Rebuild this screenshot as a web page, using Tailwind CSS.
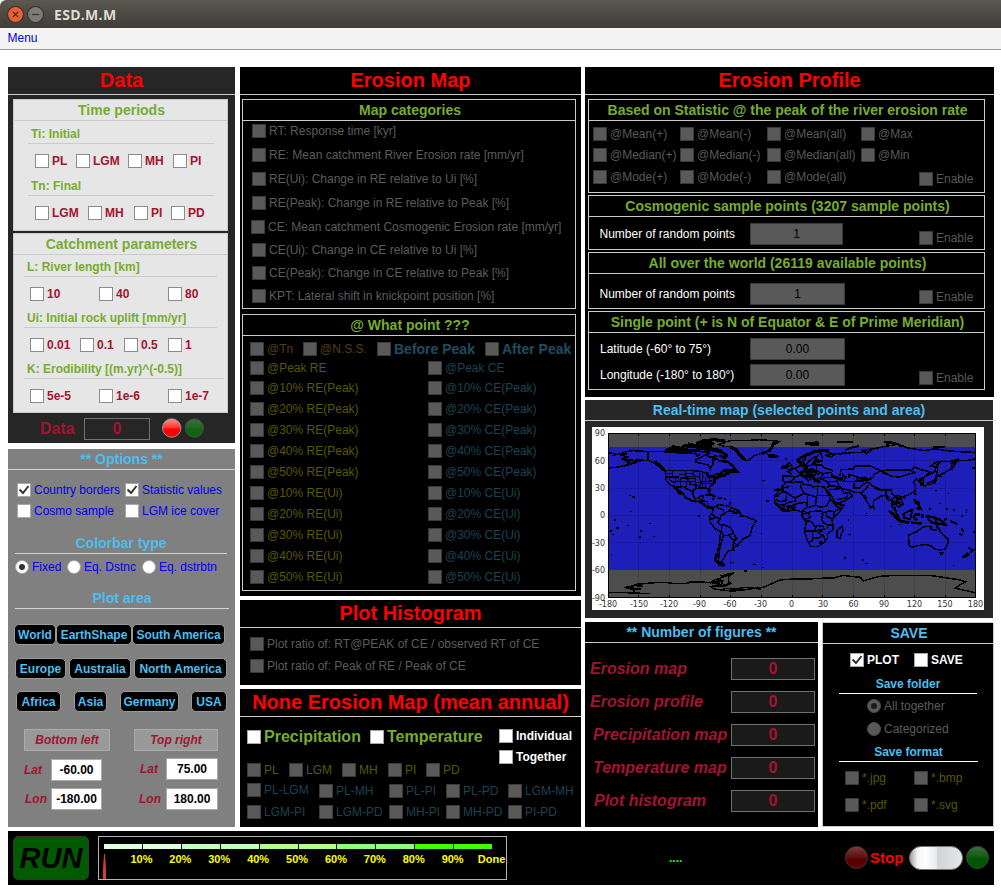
<!DOCTYPE html>
<html lang="en">
<head>
<meta charset="utf-8">
<title>ESD.M.M</title>
<script src="https://cdn.jsdelivr.net/npm/@tailwindcss/browser@4"></script>
</head>
<body class="h-[894px] w-[1001px] overflow-hidden bg-white font-['Liberation_Sans',Arial,sans-serif] text-[12px] leading-[14px] [&_label]:flex [&_label]:h-[14px] [&_label]:items-center [&_label]:gap-[3px] [&_label]:whitespace-nowrap [&_i]:size-3.5 [&_i]:shrink-0 [&_i]:border">

<!-- Window title bar -->
<header class="flex h-7 items-center gap-[3px] rounded-tl-md bg-linear-to-b from-[#5b5850] to-[#3e3d38] pl-[7px]">
  <svg class="size-[17px]" viewBox="0 0 16 16"><circle cx="8" cy="8" r="7.5" fill="#ec5f35" stroke="#33312c"/><path d="M5.5 5.5l5 5m0-5l-5 5" stroke="#4a2415" stroke-width="1.2"/></svg>
  <svg class="size-[17px]" viewBox="0 0 16 16"><circle cx="8" cy="8" r="7.5" fill="#7d7b73" stroke="#33312c"/><path d="M4.5 8h7" stroke="#3a3933" stroke-width="1.2"/></svg>
  <h1 class="ml-[7px] mt-0.5 font-['Open_Sans',sans-serif] text-[14px] font-bold tracking-[0.3px] text-[#dfdbd2]">ESD.M.M</h1>
</header>
<nav class="h-[22px] border-b border-[#999] bg-[#f3f3f3] pl-[7.5px] leading-[21px] text-[#0000e6]">Menu</nav>

<main class="mt-[17px] flex pl-2">
  <!-- Left column -->
  <div class="flex w-[227px] flex-col gap-1.5">
    <section class="h-[376px] bg-[#262626] font-bold [&_i]:border-[#8c8c8c] [&_i]:bg-white">
      <h2 class="h-7 border-b border-[#c8cccc] text-center text-[20px] leading-[27px] text-[#f00]">Data</h2>
      <div class="ml-[5px] mt-1 h-[132px] w-[215px] border border-[#c8cccc] bg-[#e6e6e6] text-[#a2142f]">
        <h3 class="h-[21px] border-b border-[#c8cccc] pl-0.5 text-center text-[14px] leading-[21px] text-[#77ac30]">Time periods</h3>
        <h4 class="ml-3.5 mt-1 h-[19px] w-[186px] border-b border-[#c8cccc] pl-[3px] leading-[18px] text-[#77ac30]">Ti: Initial</h4>
        <div class="ml-[21px] mt-2.5 grid grid-cols-[41px_52px_45px_40px]"><label><i></i>PL</label><label><i></i>LGM</label><label><i></i>MH</label><label><i></i>PI</label></div>
        <h4 class="ml-3.5 mt-[9px] h-[19px] w-[186px] border-b border-[#c8cccc] pl-[3px] leading-[18px] text-[#77ac30]">Tn: Final</h4>
        <div class="ml-[21px] mt-2.5 grid grid-cols-[53px_46px_37px_40px]"><label><i></i>LGM</label><label><i></i>MH</label><label><i></i>PI</label><label><i></i>PD</label></div>
      </div>
      <div class="ml-[5px] mt-0.5 h-[180px] w-[215px] border border-[#c8cccc] bg-[#e6e6e6] text-[#a2142f]">
        <h3 class="h-[21px] border-b border-[#c8cccc] pl-0.5 text-center text-[14px] leading-[21px] text-[#77ac30]">Catchment parameters</h3>
        <h4 class="ml-2.5 mt-[3px] h-[19px] w-[193px] border-b border-[#c8cccc] pl-[3px] leading-[18px] text-[#77ac30]">L: River length [km]</h4>
        <div class="ml-4 mt-2.5 grid grid-cols-[69px_69px_40px]"><label><i></i>10</label><label><i></i>40</label><label><i></i>80</label></div>
        <h4 class="ml-2.5 mt-2 h-[19px] w-[193px] border-b border-[#c8cccc] pl-[3px] leading-[18px] text-[#77ac30]">Ui: Initial rock uplift [mm/yr]</h4>
        <div class="ml-4 mt-2.5 grid grid-cols-[50px_44px_44px_40px]"><label><i></i>0.01</label><label><i></i>0.1</label><label><i></i>0.5</label><label><i></i>1</label></div>
        <h4 class="ml-2.5 mt-2 h-[19px] w-[200px] border-b border-[#c8cccc] pl-[3px] leading-[18px] text-[#77ac30]">K: Erodibility [(m.yr)^(-0.5)]</h4>
        <div class="ml-4 mt-2.5 grid grid-cols-[69px_69px_40px]"><label><i></i>5e-5</label><label><i></i>1e-6</label><label><i></i>1e-7</label></div>
      </div>
      <div class="mt-[5px] flex h-[22px] items-center pl-8 text-[16px] text-[#a2142f]">
        <span class="w-11">Data</span>
        <span class="h-[22px] w-[66px] border border-[#707070] text-center leading-5">0</span>
        <svg class="mb-0.5 ml-3 h-5 w-[42px]" viewBox="0 0 42 20">
          <defs><linearGradient id="lr" x2="0" y2="1"><stop offset="0" stop-color="#ff9090"/><stop offset=".5" stop-color="#ff3030"/><stop offset=".55" stop-color="#f00"/></linearGradient><linearGradient id="lg" x2="0" y2="1"><stop offset="0" stop-color="#3c6e3c"/><stop offset=".5" stop-color="#1f671f"/><stop offset=".55" stop-color="#126312"/></linearGradient></defs>
          <circle cx="9.7" cy="10" r="9.2" fill="url(#lr)" stroke="#999"/><circle cx="32.4" cy="10" r="9.2" fill="url(#lg)" stroke="#3f4f3f"/>
        </svg>
      </div>
    </section>

    <section class="h-[378px] bg-[#808080] text-[#0000f0]">
      <h2 class="h-[21px] border-b border-[#d0d4d4] text-center text-[14px] font-bold leading-5 text-[#4dbeee]">** Options **</h2>
      <div class="ml-[9px] mt-[13px] grid grid-cols-[108px_100px] gap-y-[7px] [&_i]:border-[#a6a6a6] [&_i]:bg-white">
        <label><i><svg viewBox="0 0 12 12"><path d="M1.5 5.5L5 9L10.5 2" fill="none" stroke="#333" stroke-width="2"/></svg></i>Country borders</label>
        <label><i><svg viewBox="0 0 12 12"><path d="M1.5 5.5L5 9L10.5 2" fill="none" stroke="#333" stroke-width="2"/></svg></i>Statistic values</label>
        <label><i></i>Cosmo sample</label><label><i></i>LGM ice cover</label>
      </div>
      <h3 class="ml-[7px] mt-[15px] h-[21px] w-[212px] border-b border-[#d0d4d4] text-center text-[14px] font-bold leading-5 text-[#4dbeee]">Colorbar type</h3>
      <div class="ml-[7px] mt-1.5 grid grid-cols-[52px_75px_80px] [&_i]:rounded-full [&_i]:border-[#a6a6a6] [&_i]:bg-white">
        <label><i class="flex items-center justify-center"><b class="size-1.5 rounded-full bg-[#333]"></b></i>Fixed</label><label><i></i>Eq. Dstnc</label><label><i></i>Eq. dstrbtn</label>
      </div>
      <h3 class="ml-[7px] mt-3.5 h-[21px] w-[214px] border-b border-[#d0d4d4] text-center text-[14px] font-bold leading-5 text-[#4dbeee]">Plot area</h3>
      <div class="mt-[15px] flex flex-col gap-[13px] font-bold text-[#4dbeee] [&_button]:h-[21px] [&_button]:whitespace-nowrap [&_button]:rounded-[5px] [&_button]:border [&_button]:border-[#999] [&_button]:bg-black">
        <div class="flex pl-1.5"><button class="w-[42px]">World</button><button class="w-[76px]">EarthShape</button><button class="w-[93px]">South America</button></div>
        <div class="flex pl-[7px]"><button class="mr-[3px] w-[51px]">Europe</button><button class="mr-[3px] w-[62px]">Australia</button><button class="w-[93px]">North America</button></div>
        <div class="-mt-px flex pl-2"><button class="mr-[13px] w-[45px]">Africa</button><button class="mr-[13px] w-[33px]">Asia</button><button class="mr-3 w-[59px]">Germany</button><button class="w-9">USA</button></div>
      </div>
      <div class="mt-[17px] flex font-bold italic text-[#a2142f]">
        <span class="ml-4 h-[22px] w-[86px] border border-[#aaa] bg-[#999] text-center leading-5">Bottom left</span>
        <span class="ml-6 h-[22px] w-[84px] border border-[#aaa] bg-[#999] text-center leading-5">Top right</span>
      </div>
      <div class="mt-[7px] flex font-bold">
        <div class="mt-px grid w-[94px] grid-cols-[27px_51px] gap-y-[7px] pl-4 leading-[22px] [&_b]:italic [&_b]:text-[#a2142f] [&_span]:h-[22px] [&_span]:border [&_span]:border-[#aaa] [&_span]:bg-white [&_span]:text-center [&_span]:leading-5 [&_span]:text-black">
          <b>Lat</b><span>-60.00</span><b class="pl-px">Lon</b><span>-180.00</span>
        </div>
        <div class="ml-[37px] grid grid-cols-[27px_52px] gap-y-[7px] leading-[22px] [&_b]:italic [&_b]:text-[#a2142f] [&_span]:h-[22px] [&_span]:border [&_span]:border-[#aaa] [&_span]:bg-white [&_span]:text-center [&_span]:leading-5 [&_span]:text-black">
          <b class="pl-px">Lat</b><span>75.00</span><b>Lon</b><span>180.00</span>
        </div>
      </div>
    </section>
  </div>

  <!-- Centre column -->
  <div class="ml-[5px] flex w-[341px] flex-col gap-1 [&_section]:bg-black [&_h2]:h-7 [&_h2]:border-b [&_h2]:border-[#c8cccc] [&_h2]:text-center [&_h2]:text-[20px] [&_h2]:font-bold [&_h2]:leading-[27px] [&_h2]:text-[#f00]">
    <section class="h-[529px] [&_i]:border-[#3a3a3a] [&_i]:bg-[#595959]">
      <h2>Erosion Map</h2>
      <div class="ml-0.5 mt-1 h-[210px] w-[334px] border border-[#c8cccc] text-[#5c5c5c]">
        <h3 class="h-[21px] border-b border-[#c8cccc] pl-0.5 text-center text-[14px] font-bold leading-[21px] text-[#77ac30]">Map categories</h3>
        <div class="ml-[9px] mt-[3px] flex flex-col gap-2.5">
          <label><i></i>RT: Response time [kyr]</label>
          <label><i></i>RE: Mean catchment River Erosion rate [mm/yr]</label>
          <label><i></i>RE(Ui): Change in RE relative to Ui [%]</label>
          <label><i></i>RE(Peak): Change in RE relative to Peak [%]</label>
          <label class="-ml-px"><i></i>CE: Mean catchment Cosmogenic Erosion rate [mm/yr]</label>
          <label class="-mt-px"><i></i>CE(Ui): Change in CE relative to Ui [%]</label>
          <label class="-mt-px"><i></i>CE(Peak): Change in CE relative to Peak [%]</label>
          <label class="-mt-px"><i></i>KPT: Lateral shift in knickpoint position [%]</label>
        </div>
      </div>
      <div class="ml-0.5 mt-[5px] h-[277px] w-[334px] border border-[#c8cccc]">
        <h3 class="h-[21px] border-b border-[#c8cccc] pl-0.5 text-center text-[14px] font-bold leading-[21px] text-[#77ac30]">@ What point ???</h3>
        <div class="ml-[7px] mt-1.5 grid grid-cols-[53px_74px_108px_80px] text-[#573d12]">
          <label><i></i>@Tn</label><label><i></i>@N.S.S.</label>
          <label class="text-[14px] font-bold text-[#1f4c5f]"><i></i>Before Peak</label><label class="text-[14px] font-bold text-[#1f4c5f]"><i></i>After Peak</label>
        </div>
        <div class="ml-[7px] mt-[5px] flex">
          <div class="flex w-[178px] flex-col gap-[7px] text-[#595900]">
            <label class="-mb-px"><i></i>@Peak RE</label>
            <label><i></i>@10% RE(Peak)</label><label><i></i>@20% RE(Peak)</label><label><i></i>@30% RE(Peak)</label><label><i></i>@40% RE(Peak)</label><label><i></i>@50% RE(Peak)</label>
            <label><i></i>@10% RE(Ui)</label><label><i></i>@20% RE(Ui)</label><label><i></i>@30% RE(Ui)</label><label><i></i>@40% RE(Ui)</label><label><i></i>@50% RE(Ui)</label>
          </div>
          <div class="flex flex-col gap-[7px] text-[#1b4353]">
            <label class="-mb-px"><i></i>@Peak CE</label>
            <label><i></i>@10% CE(Peak)</label><label><i></i>@20% CE(Peak)</label><label><i></i>@30% CE(Peak)</label><label><i></i>@40% CE(Peak)</label><label><i></i>@50% CE(Peak)</label>
            <label><i></i>@10% CE(Ui)</label><label><i></i>@20% CE(Ui)</label><label><i></i>@30% CE(Ui)</label><label><i></i>@40% CE(Ui)</label><label><i></i>@50% CE(Ui)</label>
          </div>
        </div>
      </div>
    </section>

    <section class="h-[85px] text-[#5c5c5c] [&_i]:border-[#3a3a3a] [&_i]:bg-[#595959]">
      <h2>Plot Histogram</h2>
      <div class="ml-2.5 mt-[9px] flex flex-col gap-2">
        <label><i></i>Plot ratio of: RT@PEAK of CE / observed RT of CE</label>
        <label><i></i>Plot ratio of: Peak of RE / Peak of CE</label>
      </div>
    </section>

    <section class="h-[138px]">
      <h2>None Erosion Map (mean annual)</h2>
      <div class="ml-[7px] mt-3 grid h-[35px] grid-cols-[123px_129px_80px] font-bold [&_i]:border-[#a6a6a6] [&_i]:bg-white">
        <label class="mt-px text-[16px] text-[#77ac30]"><i></i>Precipitation</label>
        <label class="mt-px text-[16px] text-[#77ac30]"><i></i>Temperature</label>
        <div class="flex flex-col gap-[7px] text-white"><label><i></i>Individual</label><label><i></i>Together</label></div>
      </div>
      <div class="ml-[7px] -mt-px grid grid-cols-[42px_53px_46px_38px_40px] text-[#595900] [&_i]:border-[#3a3a3a] [&_i]:bg-[#595959]">
        <label><i></i>PL</label><label><i></i>LGM</label><label><i></i>MH</label><label><i></i>PI</label><label><i></i>PD</label>
      </div>
      <div class="ml-[7px] mt-[7px] grid grid-cols-[72px_70px_57px_62px_70px] gap-y-[7px] text-[#1b4353] [&_i]:border-[#3a3a3a] [&_i]:bg-[#595959]">
        <label class="-mt-px"><i></i>PL-LGM</label><label><i></i>PL-MH</label><label><i></i>PL-PI</label><label><i></i>PL-PD</label><label><i></i>LGM-MH</label>
        <label><i></i>LGM-PI</label><label><i></i>LGM-PD</label><label><i></i>MH-PI</label><label><i></i>MH-PD</label><label><i></i>PI-PD</label>
      </div>
    </section>
  </div>

  <!-- Right column -->
  <div class="ml-1 w-[409px]">
    <section class="h-[330px] bg-black text-[#595959] [&_i]:border-[#3a3a3a] [&_i]:bg-[#595959] [&_h3]:h-[21px] [&_h3]:border-b [&_h3]:border-[#c8cccc] [&_h3]:pl-0.5 [&_h3]:text-center [&_h3]:text-[14px] [&_h3]:font-bold [&_h3]:leading-[21px] [&_h3]:text-[#77ac30]">
      <h2 class="h-7 border-b border-[#c8cccc] text-center text-[20px] font-bold leading-[27px] text-[#f00]">Erosion Profile</h2>
      <div class="ml-[3px] mt-1 h-[94px] w-[397px] border border-[#c8cccc]">
        <h3>Based on Statistic @ the peak of the river erosion rate</h3>
        <div class="ml-1 mt-1.5 grid grid-cols-[87px_87px_94px_58px_60px] gap-y-[7px]">
          <label><i></i>@Mean(+)</label><label><i></i>@Mean(-)</label><label><i></i>@Mean(all)</label><label class="col-span-2"><i></i>@Max</label>
          <label><i></i>@Median(+)</label><label><i></i>@Median(-)</label><label><i></i>@Median(all)</label><label class="col-span-2"><i></i>@Min</label>
          <label class="mt-px"><i></i>@Mode(+)</label><label class="mt-px"><i></i>@Mode(-)</label><label class="mt-px"><i></i>@Mode(all)</label><label class="col-start-5 mt-[3px]"><i></i>Enable</label>
        </div>
      </div>
      <div class="ml-[3px] mt-0.5 h-[55px] w-[397px] border border-[#c8cccc]">
        <h3>Cosmogenic sample points (3207 sample points)</h3>
        <div class="ml-[10.5px] mt-1.5 flex"><span class="w-[150.5px] leading-[22px] text-white">Number of random points</span><span class="h-[22px] w-[93px] border border-[#3a3a3a] bg-[#595959] text-center leading-5 text-black">1</span><label class="ml-[76px] mt-2"><i></i>Enable</label></div>
      </div>
      <div class="ml-[3px] mt-0.5 h-[57px] w-[397px] border border-[#c8cccc]">
        <h3>All over the world (26119 available points)</h3>
        <div class="ml-[10.5px] mt-[9px] flex"><span class="w-[150.5px] leading-[22px] text-white">Number of random points</span><span class="h-[22px] w-[95px] border border-[#3a3a3a] bg-[#595959] text-center leading-5 text-black">1</span><label class="ml-[74px] mt-[7px]"><i></i>Enable</label></div>
      </div>
      <div class="ml-[3px] mt-0.5 h-[79px] w-[397px] border border-[#c8cccc]">
        <h3>Single point (+ is N of Equator &amp; E of Prime Meridian)</h3>
        <div class="ml-[11px] mt-[5px] flex"><span class="w-[150px] leading-[22px] text-white">Latitude (-60° to 75°)</span><span class="h-[22px] w-[95px] border border-[#3a3a3a] bg-[#595959] text-center leading-5 text-black">0.00</span></div>
        <div class="ml-[11px] mt-1 flex"><span class="w-[150px] leading-[22px] text-white">Longitude (-180° to 180°)</span><span class="h-[22px] w-[95px] border border-[#3a3a3a] bg-[#595959] text-center leading-5 text-black">0.00</span><label class="ml-[74px] mt-[7px]"><i></i>Enable</label></div>
      </div>
    </section>

    <section class="mt-[3px] h-[218px] w-[408px] bg-[#262626]">
      <h2 class="h-[21px] border-b border-[#c8cccc] text-center text-[14px] font-bold leading-5 text-[#4dbeee]">Real-time map (selected points and area)</h2>
      <svg class="ml-[7px] mt-1.5 h-[183px] w-[392px]" viewBox="0 0 392 183">
        <rect width="392" height="183" fill="#fff"/>
        <rect x="16" y="6" width="368" height="165" fill="#4d4d4d"/>
        <rect x="16" y="20" width="368" height="123" fill="#1e1eb8"/>
        <path d="M46.500 6v165M77.500 6v165M108.500 6v165M138.500 6v165M169.500 6v165M200.500 6v165M230.500 6v165M261.500 6v165M292.500 6v165M322.500 6v165M353.500 6v165M16 33.500h368M16 61.500h368M16 88.500h368M16 115.500h368" stroke="#000" stroke-opacity=".12"/>
        <g fill="none" stroke="#000" stroke-width="1.500" shape-rendering="crispEdges" transform="translate(200 88.333) scale(1.0204 -.911)">
          <!-- North America -->
          <path vector-effect="non-scaling-stroke" d="M-168 66L-162 67L-166 68.500L-162 70L-156 71L-141 70L-128 70L-115 69L-108 68L-95 68L-94 71L-85 69L-81 68L-87 65L-94 61L-94 58L-88 57L-82 55L-80 51L-79 54L-77 57L-78 62L-73 62L-70 59L-65 60L-61 56L-56 52L-60 50L-66 50L-70 47L-65 49L-64 46L-61 46L-66 44L-70 44L-70 42L-74 40L-76 37L-76 35L-81 31L-80 26L-82 29L-84 30L-90 30L-94 29.500L-97 27L-97 22L-95 18L-91 19L-90 21L-87 21L-88 16L-83 15L-83 10L-80 9L-77 8L-80 7.500L-83 8L-86 11L-88 13L-94 16L-97 16L-105 20L-106 23L-110 27L-114 31L-110 23L-112 26L-117 32L-121 35L-124 40L-124 48L-128 51L-133 56L-140 60L-148 60L-152 59L-158 56L-165 54L-158 58L-162 59L-166 62L-161 64L-168 66M-141 60V70M-124 49H-95L-89 48L-83 46L-82 42L-79 43L-75 45L-70 46L-67 45M-117 32.500L-111 31L-106 31.500L-103 29L-97 26M-179 52L-171 53L-165 54.500M-180 69L-172 67L-176 65M-92 15L-89 14L-87 13L-84 11M-92 16H-89V18"/>
          <path vector-effect="non-scaling-stroke" stroke-width="1.200" d="M-117 49V42M-124 46H-117M-124 42H-111V37M-120 42V39L-114 35V37H-94M-114 42V37M-109 41V31M-111 45H-104M-104 49V41M-104 46H-96M-104 43H-97M-102 40H-95M-97 49L-96 43L-95 40L-94 33V30M-109 41H-102V37M-103 37V32H-106M-100 37V34L-94 33M-96 43H-91M-91 47L-91 40L-89 37L-91 30M-94 36H-90M-94 33H-91M-89 35H-76M-88 42V38M-85 42V38M-88 35V30M-85 35V31M-81 42V38L-76 37M-89 37H-77M-81 35L-78 34M-80 42H-75M-73 45V41M-71 45V42M-88 46L-87 42"/>
          <path vector-effect="non-scaling-stroke" stroke-width="3" d="M-135 59L-130 55L-125 50M-112 28L-108 23L-115 31M-124 71L-118 74L-110 73L-104 77L-96 75L-90 78L-82 77L-78 81M-122 72L-112 71L-104 72L-96 71L-90 73M-112 69L-104 68.500L-98 70M-104 76L-92 76L-84 75L-78 76M-94 79L-88 81L-78 83L-68 82M-90 81L-82 80L-76 78M-90 73L-82 73L-76 71L-70 70L-64 66L-66 63L-71 66M-86 70L-79 72M-76 73L-68 70M-57 51L-54 48L-60 48L-66 49M-64 47L-66 44L-72 43L-76 40L-76 36M-83 28L-80 25M-84 47L-82 43L-76 43"/>
          <path vector-effect="non-scaling-stroke" stroke-width="2" d="M-95 69L-93 65L-90 67M-84 66L-80 64L-73 65M-80 73L-75 73L-72 69M-70 61L-67 59L-62 58L-56 53M-165 62L-155 60L-146 61M-157 57L-153 58M-170 68L-164 66M-88 77L-80 79M-102 79L-94 77M-118 76L-110 75M-85 22L-80 23L-75 20M-73 19L-69 19M-78 18H-76M-67 18H-65M-61 15V11M-83 10L-78 9M-105 20L-98 16L-94 15"/>
          <!-- Greenland and North Atlantic -->
          <path vector-effect="non-scaling-stroke" d="M-68 80L-60 82L-45 82L-32 83L-20 82L-12 81L-19 77L-20 73L-24 70L-30 68L-38 65L-41 62L-44 60L-49 62L-53 67L-53 71L-58 75L-68 76L-72 78L-65 80M-23 66L-17 66L-14 65L-18 63.500L-22 64Z"/>
          <path vector-effect="non-scaling-stroke" stroke-width="3" d="M-88 82L-76 83L-66 82M-60 75L-55 72L-52 68L-46 61M-23 70L-20 74L-18 79L-13 81M-25 69L-30 68M-23 65L-15 65"/>
          <!-- South America -->
          <path vector-effect="non-scaling-stroke" d="M-77 8L-72 12L-62 10L-52 5L-50 0L-44 -2L-35 -6L-39 -13L-41 -22L-48 -26L-54 -34L-58 -35L-57 -38L-62 -39L-65 -43L-66 -46L-69 -51L-68 -53L-66 -55L-72 -53L-75 -48L-73 -40L-71 -30L-70 -18L-76 -14L-81 -6L-80 0L-78 3ZM-72 12L-73 8L-67 6L-67 1L-70 0L-70 -4L-75 -2L-79 2M-75 -2L-80 -5M-60 8L-61 5L-64 4L-67 1M-60 5L-57 2L-52 4M-57 6V2M-54 5V2M-70 -4L-73 -7L-71 -10L-65 -11L-60 -14L-58 -18L-58 -20L-54 -25L-58 -30L-53 -33M-69 -11L-69 -18L-67 -22L-63 -22L-58 -20M-67 -22L-69 -28L-71 -38L-72 -50L-69 -52M-62 -22L-57 -27L-55 -26M-58 -31L-58 -34"/>
          <path vector-effect="non-scaling-stroke" stroke-width="3" d="M-74 -43L-75 -49L-71 -54L-66 -55M-51 0L-49 -1"/>
          <!-- Africa -->
          <path vector-effect="non-scaling-stroke" d="M-6 36L-10 31L-17 21L-17 14L-13 9L-8 4L-2 5L4 6L9 4L10 -1L14 -8L12 -17L15 -27L18 -34L26 -34L32 -29L35 -24L35 -20L40 -16L40 -10L39 -5L46 3L51 11L43 12L38 18L35 24L32 31L25 32L20 31L19 33L11 34L10 37L0 36ZM44 -17L49 -12L50 -16L47 -25L44 -24ZM-13 28H-9L-9 30L-2 32M-9 27L3 19L12 24L9 30L8 36M-9 27V26L-5 25L-6 16L-12 15L-16 17M-17 21H-13V23L-9 26M3 19L4 16L-4 14L-8 11L-12 12L-13 9M12 24L15 23L24 20V22H37M25 32V22M15 23L15 14L12 14L4 13L1 11L-5 10M24 20L23 11L28 9L34 10L36 15L38 18M15 14L14 8L10 5M4 13L2 6M-5 10L-3 5M0 11L1 6M-8 10V5M14 8L23 11M10 5L15 3L19 4L27 5L31 3L34 4L36 5L42 4L47 8L42 11M9 2L16 2L18 -2L12 -5M13 -6H17L20 -8L22 -12L24 -13V-11L29 -12M30 2L29 -5L31 -8L33 -10L40 -11M34 4L34 -1L39 -4M12 -17H24L20 -18V-28L17 -29M24 -12L22 -17L28 -16L32 -15L30 -12M20 -25L26 -25L30 -22L25 -18M31 -22L32 -27M35 -15L35 -11M41 4V-2M27 -29H29V-31H27Z"/>
          <path vector-effect="non-scaling-stroke" stroke-width="2" d="M-16 14L-14 11L-8 5L-3 6M-5 10L0 8L3 9M10 4L11 0M29 -2L30 -4M29 3L31 0M27 -18L30 -17M43 12L40 15M-16 28L-13 29"/>
          <!-- Europe -->
          <path vector-effect="non-scaling-stroke" d="M-6 36L-9 38L-9 43L-2 43.500L-1 46L-4 48L2 51L8 54L8 57L11 56L10 54L19 55L24 58L30 60L22 61L25 65L20 63L17 60L13 55L11 59L6 58L6 62L14 67L22 70L30 71L41 67L33 66L38 64L44 68L54 68L60 69L68 69L73 72L80 73L88 75L104 78L113 74L130 71L140 73L152 71L162 70L180 69M-6 36L-1 37L3 42L8 44L12 42L16 38L18 40L13 44L15 45L20 41L22 37L26 41L35 37L36 33L35 31M28 41L31 46L38 47L41 42L30 41M-2 43L3 42.500M3 51L7 47L14 47L19 49L24 49L30 46M7 47L8 44M15 54L15 50L19 49M24 54L24 50M28 56L32 52L38 50L40 48M14 47L19 45L23 44M12 61L14 66L20 69L28 69L30 62M-5 50L1 51L0 54L-3 58L-5 56L-3 54L-5 52M-10 52L-6 52L-6 55L-9 54Z"/>
          <path vector-effect="non-scaling-stroke" stroke-width="3" d="M8 47L14 49L20 47M13 45L20 42L23 39L27 37M7 58L6 61L13 66M11 56L13 55M15 66L22 70L28 71M25 60L20 57M14 44L19 44L22 42M-5 57L-4 54M-9 53H-6M15 41L10 44M11 53L16 52M25 36L28 38M38 43L45 41L48 40M13 79L20 79L26 80M18 78L26 78M36 71H26"/>
          <path vector-effect="non-scaling-stroke" stroke-width="2" d="M12 51L15 49L19 51L24 48M22 55H28M10 46V42M20 48L27 45M22 65L24 61M13 63L11 59M44 80H60M52 71L57 74L66 76M68 72L73 68L78 72M90 80L98 80L105 78M92 78L100 80M138 75L150 75M45 67L54 69M104 77L112 75"/>
          <!-- Asia -->
          <path vector-effect="non-scaling-stroke" d="M34 28L39 21L43 13L52 16L59 21L56 25L51 24L48 30L57 27L62 25L67 25L70 21L73 16L77 8L80 12L80 16L87 21L91 22L95 16L98 17L98 10L103 2L101 7L100 13L105 9L109 12L106 20L114 22L121 27L121 32L119 36L122 40L126 35L129 36L128 40L131 43L140 48L141 53L136 54L142 59L155 59L163 62L157 51L156 57L163 60L170 60L180 62M36 37L44 37L45 40L48 38L50 45L53 42L50 37L54 37L60 37L66 38L71 37M44 37L46 33L48 30M36 32L42 32L47 30M36 28L46 29M44 17L52 19L55 22M61 36L61 30L66 30L70 34L74 37L79 32L88 28L97 28L98 24L101 21L106 22M68 24L71 28L75 33M81 30L88 27M92 22L92 27M98 17L101 20L105 18M102 14L107 14M47 43L48 50L60 51L62 54L77 54L87 49L80 45L80 42L74 40L71 42L67 41L56 45V41M61 37L66 41L69 38M87 49L98 50L115 50L120 47L111 44L105 42L97 43ZM87 49L92 45M117 50L120 53L127 50L135 48L131 43M130 33L131 31M131 34L136 34L140 36L141 41L139 38L132 35M141 42L145 43L142 45ZM142 46L143 54M145 44L156 51M125 40L129 42M80 10L81 6"/>
          <path vector-effect="non-scaling-stroke" stroke-width="2.500" d="M98 17L100 14L105 14L107 11M100 20L104 21M102 17L106 19M103 1L106 -6M95 5L100 0L105 -6L115 -8M98 3L104 -2M120 18L121 14L124 12L126 7L122 8M122 16L125 12M119 -3L121 1L125 1M120 -5L123 -4M117 -8L127 -9M128 1V-3M131 -1L138 -2L145 -5L150 -10L142 -9L137 -8L133 -4M149 -5L152 -4M155 -6L162 -10M107 -7L115 -8M121 24V22M109 19H111M125 34H129M140 37L142 44M127 38L124 39"/>
          <path vector-effect="non-scaling-stroke" stroke-width="2" d="M109 1L113 4L118 6L117 1L116 -4L110 -3L109 2M50 42L48 38M67 40L73 40M70 38L78 40M73 17L71 22M96 19L92 22M147 60L142 55M156 56L163 60M43 14L49 14M35 30L37 35"/>
          <!-- Oceania -->
          <path vector-effect="non-scaling-stroke" d="M114 -22L122 -18L127 -14L131 -12L136 -12L136 -15L141 -17L142 -11L146 -19L153 -26L153 -31L150 -37L145 -38L140 -37L137 -34L132 -32L124 -33L118 -35L115 -34ZM145 -41L148 -41L147 -43ZM141 -3V-9"/>
          <path vector-effect="non-scaling-stroke" stroke-width="2" d="M173 -35L176 -38L178 -38L175 -41M173 -41L170 -44L167 -46L171 -45L174 -42M164 -20L167 -22M166 -14L168 -18M177 -18H180M145 -42L148 -42"/>
          <!-- Antarctica -->
          <path vector-effect="non-scaling-stroke" d="M-180 -84.500L-160 -85L-139 -86M-155 -85V-82L-163 -79L-154 -77L-146 -78M-158 -81L-148 -81M-155 -76L-135 -74L-122 -74L-114 -75L-103 -75L-100 -73L-90 -73L-80 -74L-76 -71L-68 -68L-57 -63L-62 -67L-62 -72L-60 -75L-68 -77L-80 -78L-76 -81L-60 -83L-48 -82L-36 -80L-28 -79L-18 -74L-12 -71L0 -70L15 -70L30 -69L40 -69L50 -66L58 -67L67 -68L70 -72L76 -70L85 -67L100 -66L115 -66L135 -66L148 -68L165 -71L170 -73L165 -76L160 -80L168 -82L180 -85M-74 -70L-68 -72L-69 -76L-75 -75M-68 -80L-56 -81L-45 -79L-30 -81"/>
          <path vector-effect="non-scaling-stroke" stroke-width="2" d="M-76 -74L-68 -72M-78 -78L-66 -78L-61 -74M-70 -67L-60 -64M-60 -83L-50 -82M-163 -80L-155 -79M-78 -75L-70 -70"/>
          <!-- Small islands -->
          <path vector-effect="non-scaling-stroke" d="M-160 22H-158M-157 20H-154M-159 4H-157M-172 -14H-170M-178 -17H-176M-176 -21H-174M-162 -11H-160M-149 -17H-147M-140 -9H-138M-136 -23H-134M-174 -5H-172M-150 -24H-148M-92 -1H-90M-61 -52H-57M-38 -54H-35M-29 -57H-27M-30 -20H-29M-29 38H-26M-18 28H-14M-25 16H-23M-7 62H-5M55 -21H58M51 -47H53M69 -49H71M72 -53H74M73 2V4M55 -5H56M96 -12H98M105 -10H107M134 7H136M144 13H146M151 7H153M158 6H160M171 7V3M166 -1H168M176 52H180M140 27H142M153 24H154M-177 -44H-176M-47 -61H-44M158 -55H159M72 0H74"/>
        </g>
        <path d="M46.500 6v3M77.500 6v3M108.500 6v3M138.500 6v3M169.500 6v3M200.500 6v3M230.500 6v3M261.500 6v3M292.500 6v3M322.500 6v3M353.500 6v3M46.500 171v-3M77.500 171v-3M108.500 171v-3M138.500 171v-3M169.500 171v-3M200.500 171v-3M230.500 171v-3M261.500 171v-3M292.500 171v-3M322.500 171v-3M353.500 171v-3" stroke="#000"/>
        <rect x="16.500" y="6.500" width="367" height="164" fill="none" stroke="#000"/>
        <g font-family="DejaVu Sans" font-size="8" fill="#333" text-anchor="end"><text x="13" y="9">90</text><text x="13" y="37">60</text><text x="13" y="64">30</text><text x="13" y="91">0</text><text x="13" y="119">-30</text><text x="13" y="146">-60</text><text x="13" y="174">-90</text></g>
        <g font-family="DejaVu Sans" font-size="8" fill="#333" text-anchor="middle"><text x="16" y="180">-180</text><text x="47" y="180">-150</text><text x="77" y="180">-120</text><text x="107.500" y="180">-90</text><text x="138" y="180">-60</text><text x="168.500" y="180">-30</text><text x="199.500" y="180">0</text><text x="231" y="180">30</text><text x="261.500" y="180">60</text><text x="292" y="180">90</text><text x="322.500" y="180">120</text><text x="353" y="180">150</text><text x="383.500" y="180">180</text></g>
      </svg>
    </section>

    <div class="mt-1 flex gap-1">
      <section class="h-[205px] w-[233px] bg-black font-bold text-[#a2142f]">
        <h2 class="h-[21px] border-b border-[#c8cccc] text-center text-[14px] leading-5 text-[#4dbeee]">** Number of figures **</h2>
        <div class="mt-[15px] grid grid-cols-[141px_84px] gap-y-[11px] pl-[5px] text-[16px] leading-[22px] [&_em]:whitespace-nowrap [&_span]:h-[22px] [&_span]:border [&_span]:border-[#707070] [&_span]:bg-[#1a1a1a] [&_span]:text-center [&_span]:leading-5">
          <em>Erosion map</em><span>0</span>
          <em>Erosion profile</em><span>0</span>
          <em class="pl-[3px]">Precipitation map</em><span>0</span>
          <em class="pl-[3px]">Temperature map</em><span>0</span>
          <em class="pl-1">Plot histogram</em><span>0</span>
        </div>
      </section>
      <section class="h-[205px] w-[172px] border border-[#c8cccc] bg-black text-[#5c5c5c]">
        <h2 class="h-[21px] border-b border-[#c8cccc] pl-0.5 text-center text-[14px] font-bold leading-[21px] text-[#4dbeee]">SAVE</h2>
        <div class="ml-[27px] mt-[9px] grid grid-cols-[64px_60px] font-bold text-white [&_i]:border-[#a6a6a6] [&_i]:bg-white">
          <label><i><svg viewBox="0 0 12 12"><path d="M1.500 5.500L5 9L10.500 2" fill="none" stroke="#333" stroke-width="2"/></svg></i>PLOT</label><label><i></i>SAVE</label>
        </div>
        <h3 class="ml-4 mt-2 h-[19px] w-[138px] border-b border-white text-center font-bold leading-[18px] text-[#4dbeee]">Save folder</h3>
        <div class="ml-11 mt-[5px] flex flex-col gap-[9px] [&_i]:rounded-full [&_i]:border-[#4a4a4a] [&_i]:bg-[#595959]">
          <label><i class="flex items-center justify-center"><b class="size-1.5 rounded-full bg-[#1a1a1a]"></b></i>All together</label>
          <label><i></i>Categorized</label>
        </div>
        <h3 class="ml-4 mt-[7px] h-[19px] w-[139px] border-b border-white text-center font-bold leading-[18px] text-[#4dbeee]">Save format</h3>
        <div class="ml-[22px] mt-[9px] grid grid-cols-[69px_60px] gap-y-[13px] text-[#595900] [&_i]:border-[#3a3a3a] [&_i]:bg-[#595959]">
          <label><i></i>*.jpg</label><label><i></i>*.bmp</label><label><i></i>*.pdf</label><label><i></i>*.svg</label>
        </div>
      </section>
    </div>
  </div>
</main>

<!-- Run bar -->
<footer class="ml-2 mt-1 flex h-[54px] w-[986px] items-center bg-black">
  <button class="ml-[5px] h-11 w-[76px] rounded-[5px] border border-[#333] bg-[#005a00] text-[29px] font-bold italic leading-10 text-black">RUN</button>
  <div class="ml-[9px] flex h-11 w-[409px] border border-[#b4b4b4]">
    <svg class="ml-1 mt-[17px] h-[25px] w-[3px]" viewBox="0 0 3 25"><path d="M1 0h1L3 15V25H0V15z" fill="#d83a3a"/></svg>
    <div class="-ml-0.5 mt-[7px] w-[400px]">
      <div class="grid w-[388px] grid-cols-10 gap-px [&_span]:h-[5px]"><span class="bg-[#e0ffe0]"></span><span class="bg-[#e0ffe0]"></span><span class="bg-[#c0ffc0]"></span><span class="bg-[#c0ffc0]"></span><span class="bg-[#b0ff90]"></span><span class="bg-[#b0ff90]"></span><span class="bg-[#90ff80]"></span><span class="bg-[#90ff80]"></span><span class="bg-[#40ff00]"></span><span class="bg-[#40ff00]"></span></div>
      <div class="ml-[18px] mt-[3px] grid w-[389px] grid-cols-10 text-center text-[11px] font-bold text-[#ff0]"><span>10%</span><span>20%</span><span>30%</span><span>40%</span><span>50%</span><span>60%</span><span>70%</span><span>80%</span><span>90%</span><span>Done</span></div>
    </div>
  </div>
  <span class="ml-[162px] w-[176px] text-[12px] font-bold text-[#0f0]">....</span>
  <svg class="h-6 w-6" viewBox="0 0 24 24"><defs><linearGradient id="dr" x2="0" y2="1"><stop offset="0" stop-color="#7a3c3c"/><stop offset=".5" stop-color="#5c1010"/><stop offset=".55" stop-color="#5a0000"/></linearGradient></defs><circle cx="11.500" cy="11.500" r="11" fill="url(#dr)" stroke="#4a3030"/></svg>
  <span class="ml-px w-[39px] text-[15px] font-bold text-[#f00]">Stop</span>
  <svg class="h-6 w-[54px]" viewBox="0 0 54 24"><defs><linearGradient id="sw"><stop offset="0" stop-color="#999"/><stop offset=".15" stop-color="#f4f4f4"/><stop offset=".3" stop-color="#fff"/><stop offset=".52" stop-color="#e8e8ea"/><stop offset=".53" stop-color="#d0d2d4"/><stop offset="1" stop-color="#e6e7e8"/></linearGradient></defs><rect x=".5" y=".5" width="53" height="23" rx="11.500" fill="url(#sw)" stroke="#777"/></svg>
  <svg class="ml-[3px] h-6 w-6" viewBox="0 0 24 24"><defs><linearGradient id="dg" x2="0" y2="1"><stop offset="0" stop-color="#3c6e3c"/><stop offset=".5" stop-color="#105810"/><stop offset=".55" stop-color="#005600"/></linearGradient></defs><circle cx="11.500" cy="11.500" r="11" fill="url(#dg)" stroke="#304a30"/></svg>
</footer>
</body>
</html>
